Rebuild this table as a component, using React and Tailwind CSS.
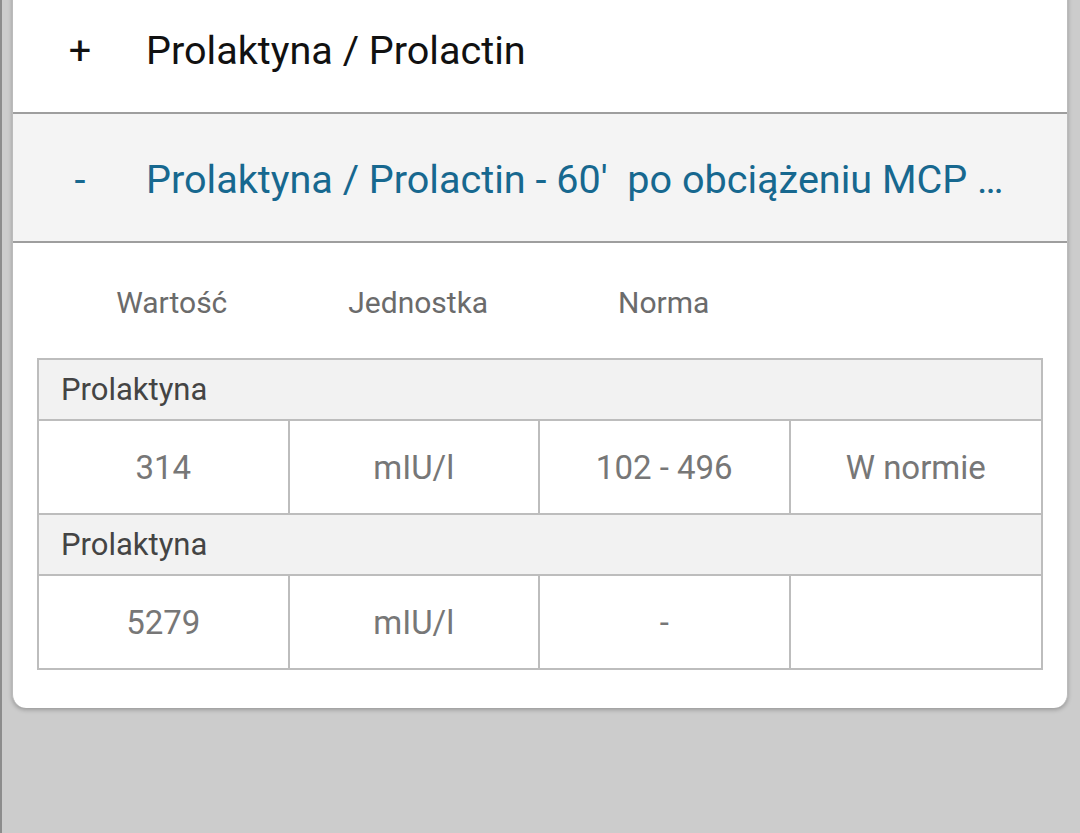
import React from "react";

const font = { fontFamily: "Roboto, 'Noto Sans', sans-serif" };

function Group({ label, cells, last }) {
  return (
    <>
      <div className="h-[61px] border-b-2 border-[#bdbdbd] bg-[#f2f2f2] flex items-center pl-[22px] pt-[2px] text-[31px] text-[#444444]">
        {label}
      </div>
      <div className={"grid grid-cols-4 divide-x-2 divide-[#bdbdbd] " + (last ? "h-[92px]" : "h-[94px] border-b-2 border-[#bdbdbd]")}>
        {cells.map((c, i) => (
          <div key={i} className="flex items-center justify-center pt-[2px] text-[33px] text-[#777777]">
            {c}
          </div>
        ))}
      </div>
    </>
  );
}

export default function App() {
  return (
    <div className="h-[833px] w-[1080px] bg-[#cccccc] border-l-2 border-[#8c8c8c] overflow-hidden" style={font}>
      <div className="ml-[10px] w-[1056px] -mt-[15px] bg-white rounded-b-[14px] border-x border-[#bbbbbb] shadow-[0_2px_4px_rgba(0,0,0,0.25)] pb-[38px]">
        <div className="h-[129px] flex items-center pt-[5px] border-b-2 border-[#9e9e9e] text-[39.6px] text-[#111111]">
          <div className="w-[133px] text-center pl-[1px]">+</div>
          <div>Prolaktyna / Prolactin</div>
        </div>
        <div className="h-[129px] flex items-center pt-[5px] border-b-2 border-[#9e9e9e] bg-[#f4f4f4] text-[39.6px] text-[#17688f]">
          <div className="w-[133px] text-center pl-[1px]">-</div>
          <div className="whitespace-pre">Prolaktyna / Prolactin - 60′  po obciążeniu MCP …</div>
        </div>
        <div className="px-[24px]">
          <div className="h-[115px] grid grid-cols-4 items-center pt-[4px] text-center text-[30px] text-[#6b6b6b]">
            <div className="pl-[18px]">Wartość</div>
            <div className="pl-[8px]">Jednostka</div>
            <div className="pr-[4px]">Norma</div>
            <div></div>
          </div>
          <div className="border-2 border-[#bdbdbd]">
            <Group label="Prolaktyna" cells={["314", "mIU/l", "102 - 496", "W normie"]} />
            <Group label="Prolaktyna" cells={["5279", "mIU/l", "-", ""]} last />
          </div>
        </div>
      </div>
    </div>
  );
}
